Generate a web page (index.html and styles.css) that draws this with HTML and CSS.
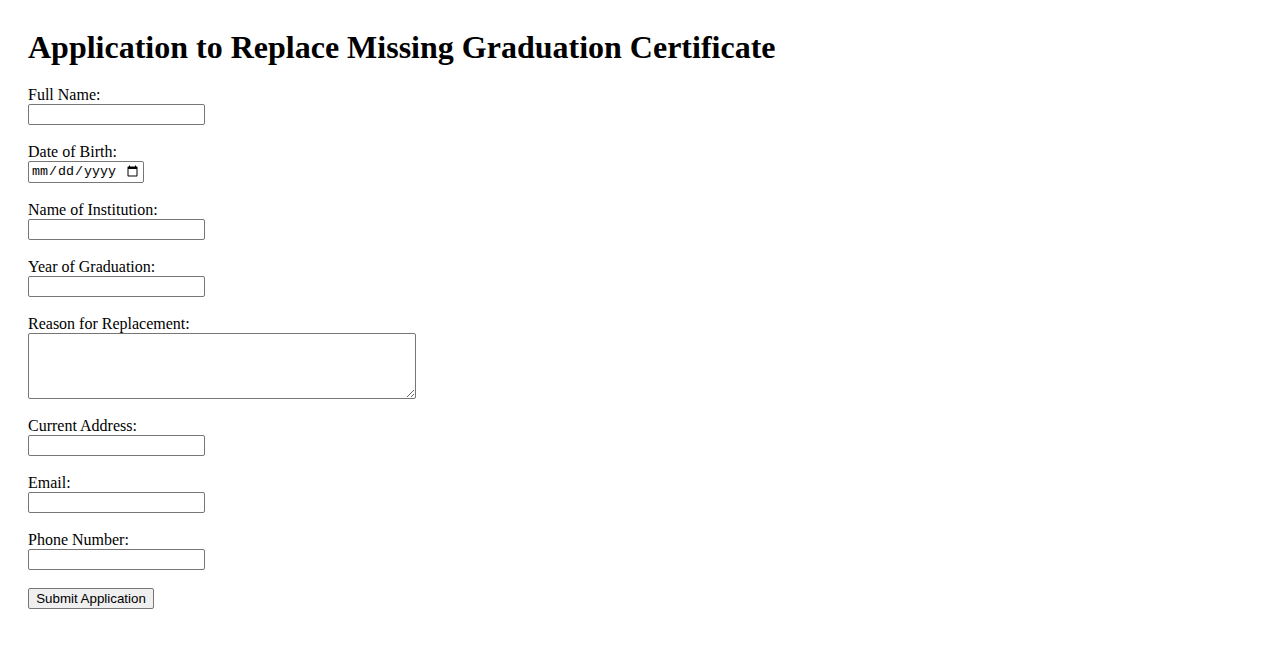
FILE: index.html
```html
<!DOCTYPE html>
<html lang="en">
<head>
<meta charset="utf-8">
<title>Application to Replace Missing Graduation Certificate</title>
<link rel="stylesheet" href="styles.css">
</head>
<body>
<main class="page">
  <h1 class="title">Application to Replace Missing Graduation Certificate</h1>
  <form class="form">
    <div class="field">
      <label class="label" for="name">Full Name:</label>
      <input class="input" type="text" id="name">
    </div>
    <div class="field">
      <label class="label" for="dob">Date of Birth:</label>
      <input class="input date" type="date" id="dob">
    </div>
    <div class="field">
      <label class="label" for="inst">Name of Institution:</label>
      <input class="input" type="text" id="inst">
    </div>
    <div class="field">
      <label class="label" for="year">Year of Graduation:</label>
      <input class="input" type="text" id="year">
    </div>
    <div class="field">
      <label class="label" for="reason">Reason for Replacement:</label>
      <textarea class="textarea" id="reason"></textarea>
    </div>
    <div class="field">
      <label class="label" for="addr">Current Address:</label>
      <input class="input" type="text" id="addr">
    </div>
    <div class="field">
      <label class="label" for="email">Email:</label>
      <input class="input" type="email" id="email">
    </div>
    <div class="field">
      <label class="label" for="phone">Phone Number:</label>
      <input class="input" type="tel" id="phone">
    </div>
    <button class="submit" type="submit">Submit Application</button>
  </form>
</main>
</body>
</html>
```

FILE: styles.css
```css
html, body {
  margin: 0;
  padding: 0;
  background: #fff;
}
body {
  font-family: "Liberation Serif", "Times New Roman", serif;
  font-size: 16px;
  color: #000;
}
.page {
  padding: 29px 28px 28px;
}
.title {
  font-size: 32px;
  font-weight: bold;
  line-height: 37px;
  margin: 0 0 20px;
}
.form {
  display: flex;
  flex-direction: column;
  align-items: flex-start;
}
.field {
  display: flex;
  flex-direction: column;
  align-items: flex-start;
  margin-bottom: 18px;
}
.label {
  line-height: 18px;
}
.input {
  margin: 0;
  width: 177px;
  height: 21px;
  box-sizing: border-box;
  font-family: "Liberation Sans", Arial, sans-serif;
  font-size: 13.33px;
  border: 1px solid #767676;
  border-radius: 2px;
  padding: 1px 2px;
}
.input.date {
  width: 116px;
  height: 22px;
  font-family: "Liberation Mono", monospace;
}
.textarea {
  margin: 0;
  width: 388px;
  height: 66px;
  box-sizing: border-box;
  border: 1px solid #767676;
  border-radius: 2px;
  padding: 2px;
  font-family: "Liberation Mono", monospace;
  font-size: 13.33px;
}
.submit {
  margin: 0;
  width: 126px;
  height: 21px;
  font-family: "Liberation Sans", Arial, sans-serif;
  font-size: 13.33px;
  padding: 1px 6px;
  border: 1px solid #767676;
  border-radius: 2px;
  background: #efefef;
  color: #000;
}
```
